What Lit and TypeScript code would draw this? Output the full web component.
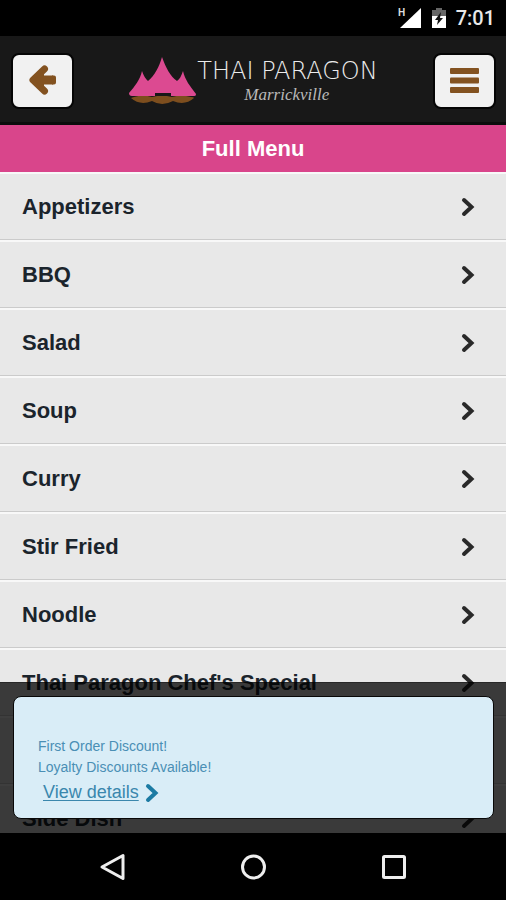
import { LitElement, html, css, svg } from "lit";
import { customElement, property } from "lit/decorators.js";

const chevron = html`<svg width="14" height="20" viewBox="0 0 14 20" fill="none" stroke="currentColor" aria-hidden="true">
  ${svg`<path d="M3 3 L10.5 10 L3 17" stroke-width="4" stroke-linecap="round" stroke-linejoin="miter"/>`}
</svg>`;

@customElement("status-bar")
export class StatusBar extends LitElement {
  static styles = css`
    :host {
      display: flex;
      align-items: center;
      justify-content: flex-end;
      gap: 10px;
      height: 36px;
      padding-right: 11px;
      background: #000;
      color: #e8e8e8;
      font: 500 20px/36px Roboto, sans-serif;
      flex: none;
    }
    svg {
      display: block;
    }
    .network {
      font: 700 10px "Liberation Sans", sans-serif;
    }
  `;
  render() {
    return html`
      <svg width="25" height="22" viewBox="0 0 25 22" aria-label="Signal">
        <path d="M24 1 V21 H3 Z" fill="#fff" />
        <path d="M0 0 H10 V10 H0 Z" fill="#000" />
        <text class="network" x="1" y="9" fill="#ddd">H</text>
      </svg>
      <svg width="14" height="22" viewBox="0 0 14 22" aria-label="Battery charging">
        <path d="M0 3 H4 V1 H10 V3 H14 V12 H0 Z" fill="#666" />
        <path d="M0 9 H14 V21 H0 Z" fill="#fff" />
        <path d="M9 5 L3 13 H6 L5 18 L11 11 H8 Z" fill="#111" />
      </svg>
      <span>7:01</span>
    `;
  }
}

@customElement("app-header")
export class AppHeader extends LitElement {
  static styles = css`
    :host {
      display: flex;
      align-items: center;
      justify-content: space-between;
      box-sizing: border-box;
      height: 89px;
      padding: 0 10px 0 11px;
      background: #181818;
      box-shadow: inset 0 -3px #0c0c0c;
      flex: none;
    }
    button {
      display: grid;
      place-items: center;
      box-sizing: border-box;
      width: 63px;
      height: 56px;
      padding: 0;
      background: #f1f1f1;
      border: 2px solid #050505;
      border-radius: 8px;
    }
    .logo {
      display: flex;
      align-items: center;
      gap: 1px;
      color: #ececec;
      text-decoration: none;
      white-space: nowrap;
    }
    .words {
      display: flex;
      flex-direction: column;
    }
    .name {
      font: 200 24px/28px "DejaVu Sans", sans-serif;
    }
    .place {
      padding-left: 47px;
      font: italic 17px/20px "Liberation Serif", serif;
      color: #b8b8b8;
    }
  `;
  render() {
    return html`
      <button aria-label="Back">
        <svg width="30" height="34" viewBox="0 0 30 34" fill="none" stroke="#835220">
          <path d="M5 16 H25" stroke-width="9" />
          <path d="M24 13.5 H26 V18.5 H24" stroke-width="4" stroke-linejoin="round" />
          <path d="M16.5 5 L5 16 L16.5 27" stroke-width="7" stroke-linecap="round" stroke-linejoin="round" />
          <path d="M6 16 L16 7 V25 Z" fill="#835220" stroke="none" />
        </svg>
      </button>
      <a class="logo" href="#">
        <svg width="67" height="48" viewBox="0 0 67 48" aria-hidden="true">
          <path d="M5 40 Q14 37 23 40 Q33 37 43 40 Q52 37 62 40 Q65 40 65 41 Q56 49 44 44 Q33 50 23 44 Q11 49 2 41 Z" fill="#7d4e1e" />
          <path d="M0 36 C6 29 11 23 13 14 C15 20 17 22 19 24 C26 18 30 10 33 0 C37 11 41 19 48 24 C51 22 52 19 54 14 C56 23 61 29 67 37 C67 39 66 39 64 39 H42 V36 H26 V39 H3 Q0 39 0 36 Z" fill="#dc4a91" />
          <path d="M26 36 H41 V39 H26 Z" fill="#181818" />
        </svg>
        <span class="words">
          <span class="name">THAI PARAGON</span>
          <span class="place">Marrickville</span>
        </span>
      </a>
      <button aria-label="Menu">
        <svg width="30" height="28" viewBox="0 0 30 28" fill="#835220">
          <rect x="1" y="1" width="29" height="6" rx="1" />
          <rect x="1" y="10.5" width="29" height="6" rx="1" />
          <rect x="1" y="20" width="29" height="6" rx="1" />
        </svg>
      </button>
    `;
  }
}

@customElement("menu-list")
export class MenuList extends LitElement {
  @property({ attribute: false }) items: string[] = [];
  static styles = css`
    ul {
      margin: 0;
      padding: 0;
      list-style: none;
    }
    a {
      display: flex;
      align-items: center;
      justify-content: space-between;
      box-sizing: border-box;
      height: 68px;
      padding: 0 31px 0 22px;
      background: #e8e8e8;
      border-top: 2px solid #f8f8f8;
      border-bottom: 1px solid #cbcbcb;
      color: #1b242c;
      font: 700 22px/28px "Liberation Sans", Arial, sans-serif;
      text-decoration: none;
    }
    svg {
      color: #292929;
    }
  `;
  render() {
    return html`<ul>
      ${this.items.map((item) => html`<li><a href="#"><span>${item}</span>${chevron}</a></li>`)}
    </ul>`;
  }
}

@customElement("promo-banner")
export class PromoBanner extends LitElement {
  static styles = css`
    :host {
      display: block;
      box-sizing: border-box;
      padding: 13px 12px 14px 13px;
      background: rgba(0, 0, 0, 0.75);
      border-top: 1px solid rgba(0, 0, 0, 0.3);
    }
    .card {
      box-sizing: border-box;
      padding: 39px 24px 13px;
      background: #d9edf7;
      border: 1px solid #080808;
      border-radius: 8px;
      color: #4a8fb5;
      font: 14px/21px "Liberation Sans", Arial, sans-serif;
    }
    p {
      margin: 0;
    }
    a {
      display: inline-flex;
      align-items: center;
      gap: 6px;
      margin-top: 2px;
      padding-left: 5px;
      color: #3a87ad;
      font-size: 18px;
      line-height: 25px;
      text-decoration: none;
    }
    .text {
      text-decoration: underline;
      text-decoration-thickness: 1px;
      text-underline-offset: 2px;
    }
    svg {
      color: #1c7ba3;
    }
  `;
  render() {
    return html`<div class="card">
      <p>First Order Discount!</p>
      <p>Loyalty Discounts Available!</p>
      <a href="#"><span class="text">View details</span>${chevron}</a>
    </div>`;
  }
}

@customElement("nav-bar")
export class NavBar extends LitElement {
  static styles = css`
    :host {
      display: flex;
      align-items: center;
      justify-content: center;
      gap: 112px;
      height: 67px;
      background: #000;
      flex: none;
    }
    button {
      display: block;
      padding: 0;
      border: 0;
      background: none;
    }
    svg {
      display: block;
    }
  `;
  render() {
    return html`
      <button aria-label="Back">
        <svg width="28" height="28" viewBox="0 0 28 28" fill="none" stroke="#eee" stroke-width="3">
          <path d="M24 2.5 V25.5 L3 14 Z" stroke-linejoin="round" />
        </svg>
      </button>
      <button aria-label="Home">
        <svg width="28" height="28" viewBox="0 0 28 28" fill="none" stroke="#eee" stroke-width="3">
          <circle cx="14.5" cy="14" r="11" />
        </svg>
      </button>
      <button aria-label="Recent apps">
        <svg width="28" height="28" viewBox="0 0 28 28" fill="none" stroke="#eee" stroke-width="3">
          <rect x="4.5" y="3.5" width="21" height="21" rx="1" />
        </svg>
      </button>
    `;
  }
}

@customElement("app-root")
export class AppRoot extends LitElement {
  static styles = css`
    :host {
      display: flex;
      flex-direction: column;
      height: 100vh;
      overflow: hidden;
      background: #000;
    }
    h1 {
      flex: none;
      margin: 0;
      background: #d9458b;
      color: #fff;
      text-align: center;
      font: 700 22px/47px "Liberation Sans", Arial, sans-serif;
    }
    main {
      position: relative;
      flex: 1;
      min-height: 0;
      overflow: hidden;
      background: #e8e8e8;
    }
    promo-banner {
      position: absolute;
      left: 0;
      right: 0;
      bottom: 0;
    }
  `;
  private items = [
    "Appetizers",
    "BBQ",
    "Salad",
    "Soup",
    "Curry",
    "Stir Fried",
    "Noodle",
    "Thai Paragon Chef's Special",
    "",
    "Side Dish",
  ];
  render() {
    return html`
      <status-bar></status-bar>
      <app-header></app-header>
      <h1>Full Menu</h1>
      <main>
        <menu-list .items=${this.items}></menu-list>
        <promo-banner></promo-banner>
      </main>
      <nav-bar></nav-bar>
    `;
  }
}
